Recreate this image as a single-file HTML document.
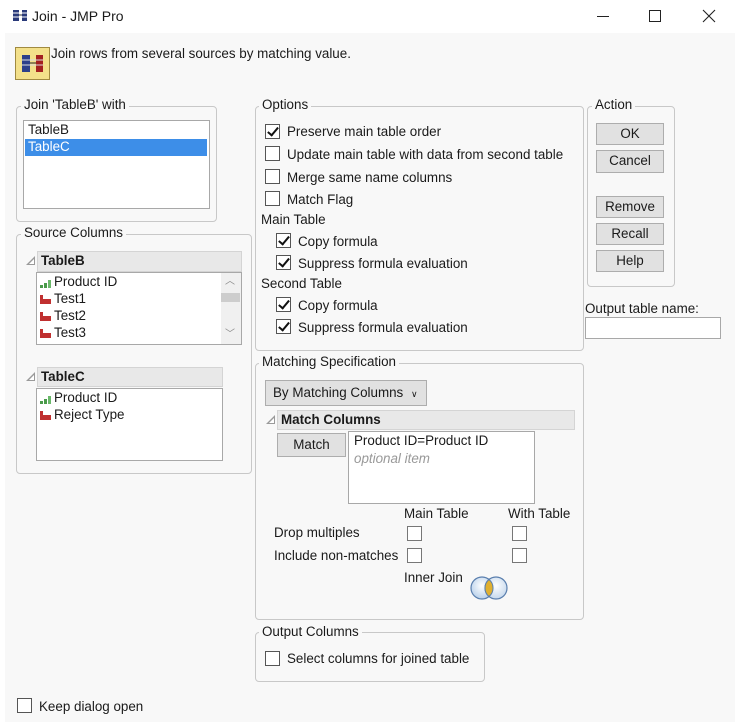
<!DOCTYPE html>
<html><head><meta charset="utf-8"><style>
*{margin:0;padding:0;box-sizing:border-box}
body{width:740px;height:722px;background:#fff;position:relative;overflow:hidden;font-family:"Liberation Sans",sans-serif;font-size:13.4px;color:#1a1a1a}
.a{position:absolute}
.t{position:absolute;line-height:16px;white-space:nowrap}
.g{position:absolute;border:1px solid #c8c8c8;border-radius:4px}
.gl{position:absolute;background:#f8f8f8;padding:0 3px;line-height:16px;white-space:nowrap}
.cb{position:absolute;width:15px;height:15px;border:1px solid #555;background:#fff}
.cb.c::after{content:"";position:absolute;left:4px;top:0px;width:4px;height:9px;border:solid #111;border-width:0 2px 2px 0;transform:rotate(40deg)}
.box{position:absolute;background:#fff;border:1px solid #a8a8a8}
.btn{position:absolute;background:#e1e1e1;border:1px solid #adadad;text-align:center;line-height:19px}
.hd{position:absolute;background:#e8e8e8;border:1px solid #d4d4d4;font-weight:bold;line-height:17px;padding-left:3px}
.tri{position:absolute;width:0;height:0;border-left:9px solid transparent;border-bottom:9px solid #9a9a9a}
.tri::after{content:"";position:absolute;left:-6px;top:3px;border-left:5px solid transparent;border-bottom:5px solid #fff}
.ig{position:absolute;width:11px;height:9px}
</style></head><body>
<div class="a" style="left:5px;top:33px;width:730px;height:689px;background:#f8f8f8"></div>
<!-- title -->
<svg class="a" style="left:13px;top:9px" width="15" height="13"><rect x="0" y="1" width="6" height="11" fill="#2a3a7a"/><rect x="9" y="1" width="5" height="11" fill="#2a3a7a"/><line x1="0" y1="4" x2="14" y2="4" stroke="#fff"/><line x1="0" y1="8" x2="14" y2="8" stroke="#fff"/><line x1="6" y1="6" x2="9" y2="6" stroke="#333"/></svg>
<div class="t" style="left:32px;top:8px;font-size:14px">Join - JMP Pro</div>
<div class="a" style="left:597px;top:16px;width:12px;height:1px;background:#222"></div>
<div class="a" style="left:649px;top:10px;width:12px;height:12px;border:1px solid #222"></div>
<svg class="a" style="left:702px;top:9px" width="14" height="14"><path d="M1 1L13 13M13 1L1 13" stroke="#222" stroke-width="1.1"/></svg>
<!-- header icon -->
<div class="a" style="left:15px;top:47px;width:35px;height:33px;background:#f3e08a;border:1px solid #a08a40"></div>
<svg class="a" style="left:20px;top:52px" width="26" height="24"><rect x="2" y="3" width="8" height="17" fill="#2c3f8a"/><rect x="16" y="3" width="7" height="17" fill="#a32020"/><g stroke="#ddd"><line x1="2" y1="8" x2="23" y2="8"/><line x1="2" y1="13" x2="23" y2="13"/></g><line x1="10" y1="11" x2="16" y2="11" stroke="#222"/></svg>
<div class="t" style="left:51px;top:46px">Join rows from several sources by matching value.</div>
<!-- Join with -->
<div class="g" style="left:16px;top:106px;width:201px;height:116px"></div>
<div class="gl" style="left:21px;top:97px">Join 'TableB' with</div>
<div class="box" style="left:23px;top:120px;width:187px;height:89px"></div>
<div class="t" style="left:28px;top:122px">TableB</div>
<div class="a" style="left:25px;top:139px;width:182px;height:17px;background:#3d8ee8"></div>
<div class="t" style="left:28px;top:139px;color:#fff">TableC</div>
<!-- Source columns -->
<div class="g" style="left:16px;top:234px;width:236px;height:240px"></div>
<div class="gl" style="left:21px;top:225px">Source Columns</div>
<div class="tri" style="left:26px;top:256px"></div>
<div class="hd" style="left:37px;top:251px;width:205px;height:21px">TableB</div>
<div class="box" style="left:36px;top:272px;width:206px;height:73px"></div>
<div class="a" style="left:221px;top:273px;width:20px;height:71px;background:#f0f0f0"></div>
<div class="a" style="left:221px;top:293px;width:19px;height:9px;background:#cdcdcd"></div>
<div class="t" style="left:225px;top:274px;font-size:10px;color:#888">︿</div>
<div class="t" style="left:225px;top:327px;font-size:10px;color:#888">﹀</div>
<svg class="ig" style="left:40px;top:279px"><rect x="0" y="6" width="3" height="3" fill="#4a9a4a"/><rect x="4" y="4" width="3" height="5" fill="#4a9a4a"/><rect x="8" y="1" width="3" height="8" fill="#6ab86a"/></svg>
<div class="t" style="left:54px;top:274px">Product ID</div>
<svg class="ig" style="left:40px;top:295px"><rect x="0" y="0" width="3" height="9" fill="#c03030"/><rect x="3" y="4" width="8" height="5" fill="#c03030"/></svg>
<div class="t" style="left:54px;top:291px">Test1</div>
<svg class="ig" style="left:40px;top:312px"><rect x="0" y="0" width="3" height="9" fill="#c03030"/><rect x="3" y="4" width="8" height="5" fill="#c03030"/></svg>
<div class="t" style="left:54px;top:308px">Test2</div>
<svg class="ig" style="left:40px;top:329px"><rect x="0" y="0" width="3" height="9" fill="#c03030"/><rect x="3" y="4" width="8" height="5" fill="#c03030"/></svg>
<div class="t" style="left:54px;top:325px">Test3</div>
<div class="tri" style="left:26px;top:372px"></div>
<div class="hd" style="left:37px;top:367px;width:186px;height:20px">TableC</div>
<div class="box" style="left:36px;top:388px;width:187px;height:73px"></div>
<svg class="ig" style="left:40px;top:395px"><rect x="0" y="6" width="3" height="3" fill="#4a9a4a"/><rect x="4" y="4" width="3" height="5" fill="#4a9a4a"/><rect x="8" y="1" width="3" height="8" fill="#6ab86a"/></svg>
<div class="t" style="left:54px;top:390px">Product ID</div>
<svg class="ig" style="left:40px;top:411px"><rect x="0" y="0" width="3" height="9" fill="#c03030"/><rect x="3" y="4" width="8" height="5" fill="#c03030"/></svg>
<div class="t" style="left:54px;top:407px">Reject Type</div>
<!-- Options -->
<div class="g" style="left:255px;top:106px;width:329px;height:245px"></div>
<div class="gl" style="left:259px;top:97px">Options</div>
<div class="cb c" style="left:265px;top:124px"></div><div class="t" style="left:287px;top:124px">Preserve main table order</div>
<div class="cb" style="left:265px;top:146px"></div><div class="t" style="left:287px;top:147px">Update main table with data from second table</div>
<div class="cb" style="left:265px;top:169px"></div><div class="t" style="left:287px;top:170px">Merge same name columns</div>
<div class="cb" style="left:265px;top:191px"></div><div class="t" style="left:287px;top:192px">Match Flag</div>
<div class="t" style="left:261px;top:212px">Main Table</div>
<div class="cb c" style="left:276px;top:233px"></div><div class="t" style="left:298px;top:234px">Copy formula</div>
<div class="cb c" style="left:276px;top:255px"></div><div class="t" style="left:298px;top:256px">Suppress formula evaluation</div>
<div class="t" style="left:261px;top:276px">Second Table</div>
<div class="cb c" style="left:276px;top:297px"></div><div class="t" style="left:298px;top:298px">Copy formula</div>
<div class="cb c" style="left:276px;top:319px"></div><div class="t" style="left:298px;top:320px">Suppress formula evaluation</div>
<!-- Action -->
<div class="g" style="left:587px;top:106px;width:88px;height:181px"></div>
<div class="gl" style="left:592px;top:97px">Action</div>
<div class="btn" style="left:596px;top:123px;width:68px;height:22px">OK</div>
<div class="btn" style="left:596px;top:150px;width:68px;height:23px">Cancel</div>
<div class="btn" style="left:596px;top:196px;width:68px;height:22px">Remove</div>
<div class="btn" style="left:596px;top:223px;width:68px;height:22px">Recall</div>
<div class="btn" style="left:596px;top:250px;width:68px;height:22px">Help</div>
<div class="t" style="left:585px;top:301px">Output table name:</div>
<div class="box" style="left:585px;top:317px;width:136px;height:22px"></div>
<!-- Matching -->
<div class="g" style="left:255px;top:363px;width:329px;height:257px"></div>
<div class="gl" style="left:259px;top:354px">Matching Specification</div>
<div class="btn" style="left:265px;top:380px;width:162px;height:26px;line-height:24px;text-align:left;padding-left:7px">By Matching Columns <span style="font-size:9px;margin-left:4px">∨</span></div>
<div class="tri" style="left:266px;top:415px"></div>
<div class="hd" style="left:277px;top:410px;width:298px;height:20px">Match Columns</div>
<div class="btn" style="left:277px;top:433px;width:69px;height:24px;line-height:22px">Match</div>
<div class="box" style="left:348px;top:431px;width:187px;height:73px"></div>
<div class="t" style="left:354px;top:433px">Product ID=Product ID</div>
<div class="t" style="left:354px;top:451px;color:#999;font-style:italic">optional item</div>
<div class="t" style="left:404px;top:506px">Main Table</div>
<div class="t" style="left:508px;top:506px">With Table</div>
<div class="t" style="left:274px;top:525px">Drop multiples</div>
<div class="t" style="left:274px;top:548px">Include non-matches</div>
<div class="cb" style="left:407px;top:526px;border-color:#777"></div>
<div class="cb" style="left:512px;top:526px;border-color:#777"></div>
<div class="cb" style="left:407px;top:548px;border-color:#777"></div>
<div class="cb" style="left:512px;top:548px;border-color:#777"></div>
<div class="t" style="left:404px;top:570px">Inner Join</div>
<svg class="a" style="left:470px;top:575px" width="40" height="26"><defs><radialGradient id="r" cx="50%" cy="40%" r="60%"><stop offset="0" stop-color="#fff"/><stop offset="1" stop-color="#b8d0ea"/></radialGradient></defs><circle cx="12" cy="13" r="11" fill="url(#r)" stroke="#5a7fae" stroke-width="1.2"/><circle cx="26" cy="13" r="11" fill="url(#r)" stroke="#5a7fae" stroke-width="1.2" fill-opacity="0.8"/><path d="M19 4.5 A11 11 0 0 1 19 21.5 A11 11 0 0 1 19 4.5Z" fill="#e0b030" stroke="#5a7fae"/></svg>
<!-- Output columns -->
<div class="g" style="left:255px;top:632px;width:230px;height:50px"></div>
<div class="gl" style="left:259px;top:624px">Output Columns</div>
<div class="cb" style="left:265px;top:651px"></div><div class="t" style="left:287px;top:651px">Select columns for joined table</div>
<div class="cb" style="left:17px;top:698px"></div><div class="t" style="left:39px;top:699px">Keep dialog open</div>
</body></html>
